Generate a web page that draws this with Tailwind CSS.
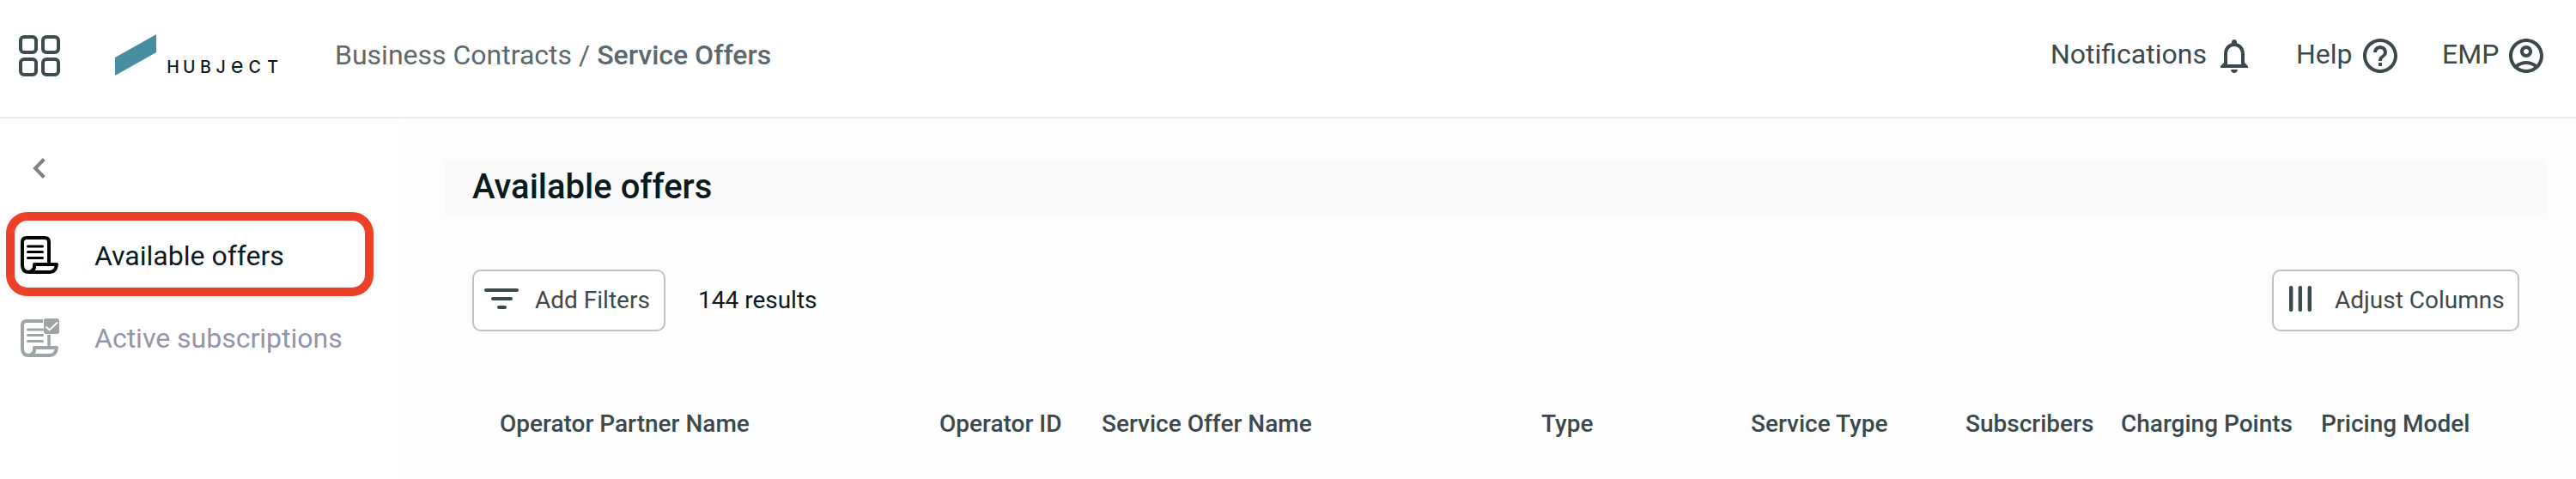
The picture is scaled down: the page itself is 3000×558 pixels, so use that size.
<!DOCTYPE html>
<html lang="en">
<head>
<meta charset="utf-8">
<title>Service Offers</title>
<script src="https://cdn.jsdelivr.net/npm/@tailwindcss/browser@4"></script>
</head>
<body class="bg-white font-['Roboto',sans-serif] w-[3000px] h-[558px] overflow-hidden flex flex-col">
<header class="h-[138px] shrink-0 border-b-2 border-[#ebebeb] flex items-start pl-[22px] pr-[34px] text-[32px] leading-10 text-[#3c494c] whitespace-nowrap">
  <svg class="mt-[41px] size-12 shrink-0" viewBox="0 0 48 48" fill="none" stroke="#3d4b4e" stroke-width="4">
    <rect x="2" y="2" width="18" height="18" rx="4"/><rect x="28" y="2" width="18" height="18" rx="4"/>
    <rect x="2" y="28" width="18" height="18" rx="4"/><rect x="28" y="28" width="18" height="18" rx="4"/>
  </svg>
  <svg class="mt-[40px] ml-16 w-[196px] h-14 shrink-0" viewBox="0 0 196 56">
    <path d="M0 27L48 0V21L0 48Z" fill="#478fa0"/>
    <text y="44.5" x="67.5 86.3 105.5 123 142.3 162.7 183.5" text-anchor="middle" class="font-['Inter',sans-serif]" font-size="19.5" font-weight="500" fill="#0a1a1e">HUBJ<tspan font-size="25.5" font-weight="400">e</tspan>CT</text>
  </svg>
  <nav class="mt-11 ml-[60px] text-[#5c696c]">Business Contracts / <span class="font-medium">Service Offers</span></nav>
  <div class="ml-auto mt-[41px] flex">
    <div class="flex w-[286px]">
      <span class="mt-0.5 w-[190px]">Notifications</span>
      <svg class="size-12" viewBox="0 0 24 24" fill="#3c494c"><path d="M12 22c1.1 0 2-.9 2-2h-4c0 1.1.89 2 2 2zm6-6v-5c0-3.07-1.64-5.64-4.5-6.32V4c0-.83-.67-1.500-1.500-1.500s-1.500.67-1.500 1.500v.68C7.630 5.360 6 7.920 6 11v5l-2 2v1h16v-1l-2-2zm-2 1H8v-6c0-2.480 1.510-4.500 4-4.500s4 2.020 4 4.500v6z"/></svg>
    </div>
    <div class="flex w-[170px]">
      <span class="mt-0.5 w-[74px]">Help</span>
      <svg class="size-12" viewBox="0 0 24 24" fill="#3c494c"><path d="M11 18h2v-2h-2v2zm1-16C6.480 2 2 6.480 2 12s4.480 10 10 10 10-4.480 10-10S17.520 2 12 2zm0 18c-4.410 0-8-3.590-8-8s3.590-8 8-8 8 3.590 8 8-3.590 8-8 8zm0-14c-2.210 0-4 1.790-4 4h2c0-1.100.9-2 2-2s2 .9 2 2c0 2-3 1.750-3 5h2c0-2.250 3-2.500 3-5 0-2.210-1.790-4-4-4z"/></svg>
    </div>
    <div class="flex">
      <span class="mt-0.5 w-[74px]">EMP</span>
      <svg class="size-12" viewBox="0 0 24 24" fill="#3c494c"><path d="M12 2C6.480 2 2 6.480 2 12s4.480 10 10 10 10-4.480 10-10S17.520 2 12 2zM7.350 18.500C8.660 17.560 10.260 17 12 17s3.340.56 4.650 1.500C15.340 19.440 13.740 20 12 20s-3.340-.56-4.650-1.500zm10.790-1.380C16.450 15.800 14.320 15 12 15s-4.450.8-6.140 2.120C4.700 15.730 4 13.950 4 12c0-4.420 3.580-8 8-8s8 3.580 8 8c0 1.950-.7 3.730-1.860 5.120zM12 6c-1.930 0-3.500 1.570-3.500 3.500S10.070 13 12 13s3.500-1.570 3.500-3.500S13.930 6 12 6zm0 5c-.83 0-1.500-.67-1.500-1.500S11.170 8 12 8s1.500.67 1.500 1.500S12.830 11 12 11z"/></svg>
    </div>
  </div>
</header>
<div class="flex flex-1">
  <aside class="w-[470px] shrink-0 bg-white text-[32px] leading-10 whitespace-nowrap">
    <svg class="mt-[44px] ml-[36px] w-5 h-7" viewBox="0 0 20 28" fill="none" stroke="#808080" stroke-width="4"><path d="M15.300 3.500L5 14L15.300 24.500"/></svg>
    <div class="mt-[37px] ml-[7px] w-[428px] h-[98px] rounded-[25px] border-10 border-[#ec4127] flex items-center pl-[7px] text-[#0a1a1e]">
      <svg class="mt-1 size-[46px] mr-10" viewBox="0 0 46 46" fill="none" stroke="#000" stroke-width="4" stroke-linejoin="round" stroke-linecap="round">
        <path d="M33 31V7q0-5-5-5H7Q2 2 2 7V34q0 8 8 8H34q7 0 8-9H16q1 7-6 9"/>
        <path stroke-width="3" d="M8.500 12H25.500M8.500 18.500H25.500M8.500 25.500H25.500"/>
      </svg>
      <span class="mt-1">Available offers</span>
    </div>
    <div class="mt-[26px] ml-6 flex text-[#9295ab]">
      <svg class="size-[46px] mr-10" viewBox="0 0 46 46" fill="none" stroke="#9ea5a6" stroke-width="4" stroke-linejoin="round">
        <path d="M26 3H7Q2 3 2 8V35q0 8 8 8H34q7 0 8-9H16q1 7-6 9"/>
        <path stroke-width="3" stroke-linecap="round" d="M8.500 13H25.500M8.500 19.500H25.500M8.500 26.500H25.500"/>
        <path stroke-width="3.500" d="M33 19V33"/>
        <rect x="27" y="0" width="18" height="18" rx="2.500" fill="#9ea5a6" stroke="none"/>
        <path stroke="#fff" stroke-width="1.800" stroke-linejoin="miter" d="M29.500 9.500L33.500 13.500L43 4.500"/>
      </svg>
      <span class="mt-[3px]">Active subscriptions</span>
    </div>
  </aside>
  <main class="flex-1 bg-[#fdfdfd] pt-12 pl-12 pr-[34px]">
    <h1 class="h-16 bg-[#fafafa] pl-8 text-[40px] leading-[63px] font-medium text-[#0a1a1e]">Available offers</h1>
    <div class="mt-16 ml-8 mr-8 flex items-center text-[28px] leading-10 text-[#3c494c] whitespace-nowrap">
      <button class="w-[225px] h-[72px] border-2 border-[#c1c1c1] rounded-[10px] bg-white flex items-center pl-3">
        <svg class="w-10 h-6 mt-[-5px] mr-[19px]" viewBox="0 0 40 24" fill="#3c494c"><rect width="40" height="4" rx="2"/><rect x="8" y="10" width="25" height="4" rx="2"/><rect x="15" y="20" width="11" height="4" rx="2"/></svg>
        <span>Add Filters</span>
      </button>
      <span class="ml-[38px] text-[#0a1a1e]">144 results</span>
      <button class="ml-auto w-[288px] h-[72px] border-2 border-[#c1c1c1] rounded-[10px] bg-white flex items-center pl-[18px]">
        <svg class="w-[26px] h-[30px] mt-[-4px] mr-[27px]" viewBox="0 0 26 30" fill="#3c494c"><rect width="4.400" height="30" rx="2"/><rect x="10.600" width="4.400" height="30" rx="2"/><rect x="21.600" width="4.400" height="30" rx="2"/></svg>
        <span>Adjust Columns</span>
      </button>
    </div>
    <div class="mt-[88px] ml-16 grid grid-cols-[512px_189px_512px_244px_250px_181px_233px_auto] text-[28px] leading-10 font-medium text-[#3c494c] whitespace-nowrap">
      <span>Operator Partner Name</span><span>Operator ID</span><span>Service Offer Name</span><span>Type</span><span>Service Type</span><span>Subscribers</span><span>Charging Points</span><span>Pricing Model</span>
    </div>
  </main>
</div>
</body>
</html>
